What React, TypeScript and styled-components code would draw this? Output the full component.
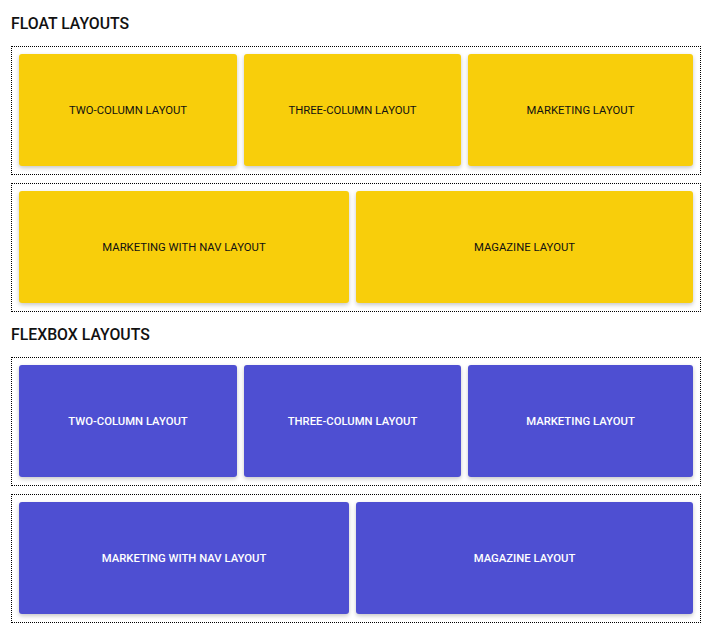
import React from "react";
import styled, { createGlobalStyle } from "styled-components";

const Global = createGlobalStyle`
  html, body { margin: 0; padding: 0; background: #ffffff; }
  body { font-family: Roboto, "Liberation Sans", Arial, sans-serif; color: #000; }
`;

const Page = styled.main`
  width: 690px;
  padding: 14px 0 0 11px;
  display: flex;
  flex-direction: column;
`;

const Section = styled.section`
  display: flex;
  flex-direction: column;
  gap: 8px;
  & + & { margin-top: 13px; }
`;

const Heading = styled.h2`
  margin: 0 0 5px;
  font-size: 15.8px;
  line-height: 19px;
  font-weight: 500;
  color: #111;
`;

const Row = styled.div<{ $cols: string }>`
  display: grid;
  grid-template-columns: ${(p) => p.$cols};
  column-gap: 7px;
  border: 1px dotted #000;
  padding: 7px 7px 8px 7px;
`;

const Card = styled.a<{ $kind: "float" | "flex" }>`
  height: 112px;
  display: flex;
  align-items: center;
  justify-content: center;
  border-radius: 3px;
  box-shadow: 0 2px 4px rgba(0, 0, 0, 0.22);
  font-size: 11.3px;
  text-transform: uppercase;
  text-decoration: none;
  background: ${(p) => (p.$kind === "float" ? "#f8ce0b" : "#4e4fd2")};
  color: ${(p) => (p.$kind === "float" ? "#111" : "#ffffff")};
  font-weight: ${(p) => (p.$kind === "float" ? 400 : 500)};
`;

const groups: { title: string; kind: "float" | "flex" }[] = [
  { title: "Float Layouts", kind: "float" },
  { title: "Flexbox Layouts", kind: "flex" },
];

const rows = [
  { cols: "218px 217px 1fr", items: ["Two-Column Layout", "Three-Column Layout", "Marketing Layout"] },
  { cols: "330px 1fr", items: ["Marketing with Nav Layout", "Magazine Layout"] },
];

export default function App() {
  return (
    <>
      <Global />
      <Page>
        {groups.map((g) => (
          <Section key={g.title}>
            <Heading>{g.title.toUpperCase()}</Heading>
            {rows.map((r, i) => (
              <Row key={i} $cols={r.cols}>
                {r.items.map((it) => (
                  <Card key={it} $kind={g.kind} href="#">
                    {it}
                  </Card>
                ))}
              </Row>
            ))}
          </Section>
        ))}
      </Page>
    </>
  );
}
